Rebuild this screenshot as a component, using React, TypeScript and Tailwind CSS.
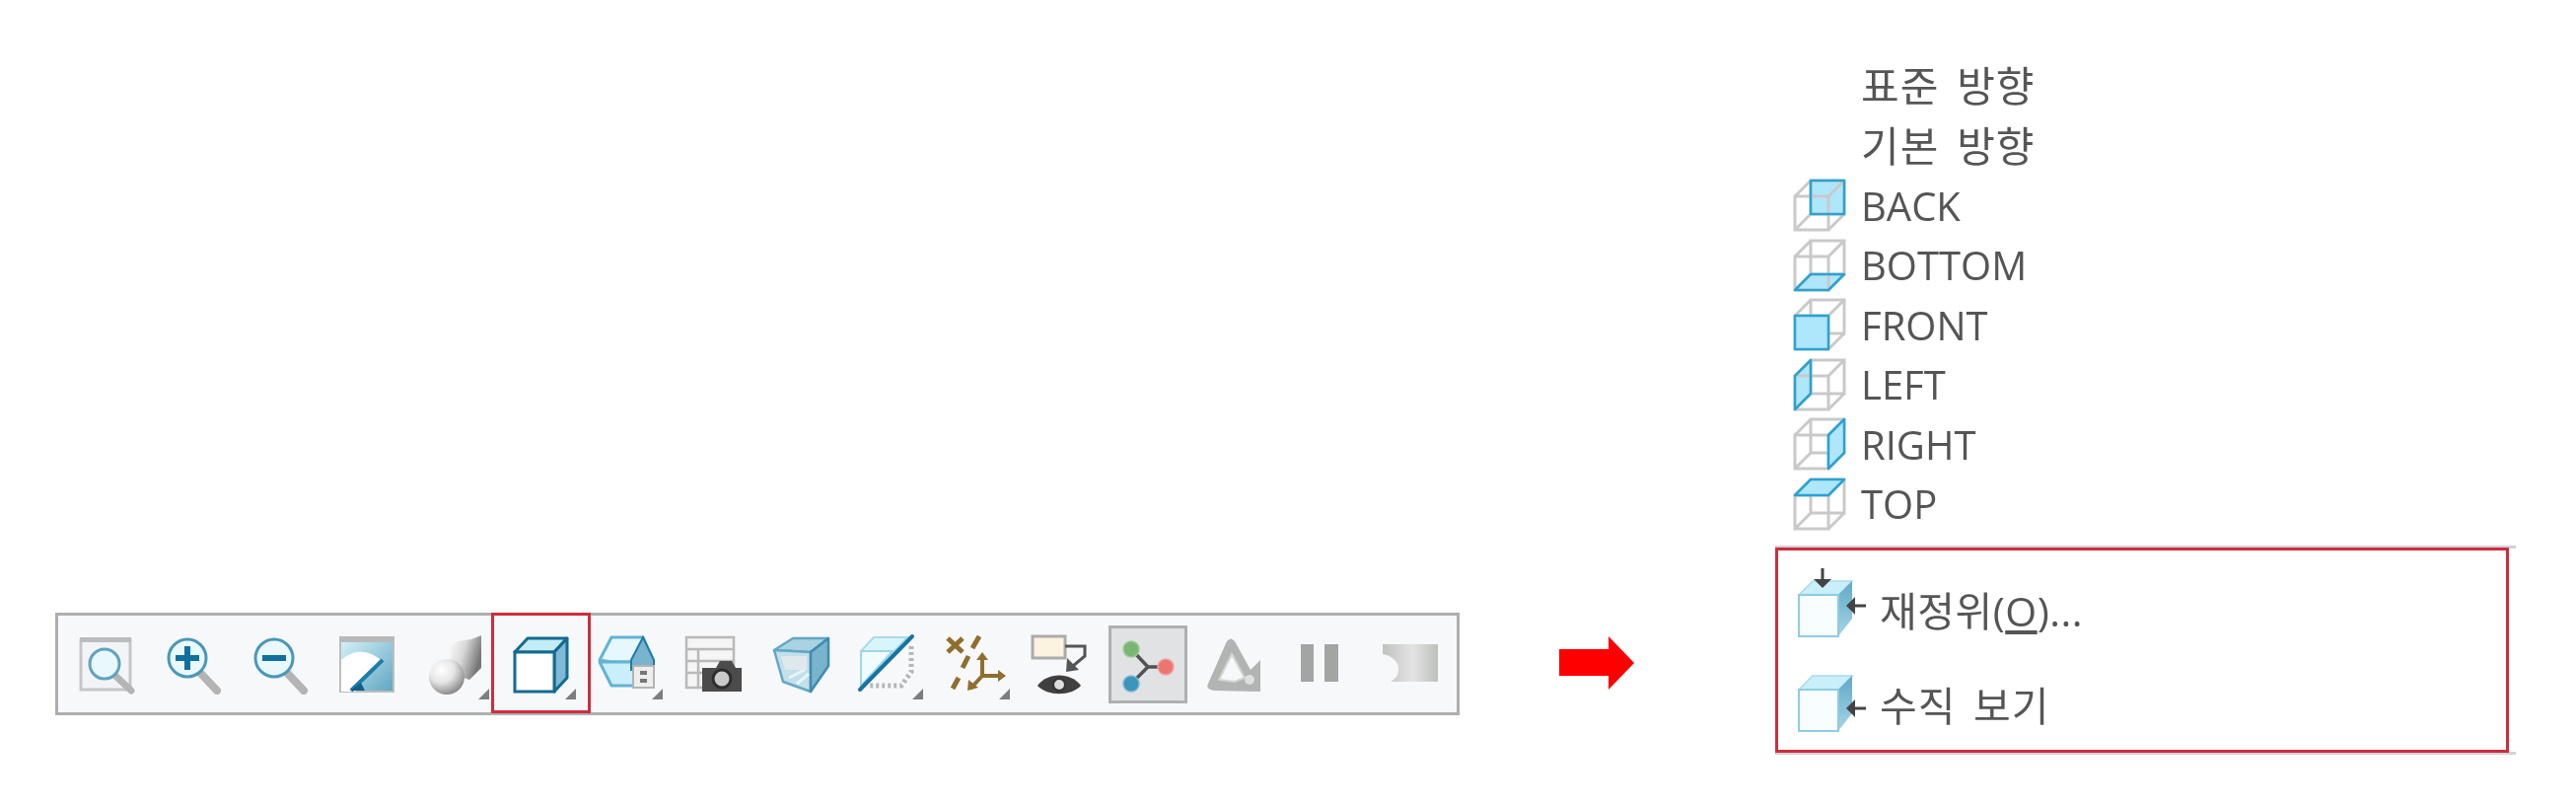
const handle = "#b4b4b4";

function Marker() {
  return <path d="M55 66 L66 66 L66 55 Z" fill="#7d7d7d" />;
}

function ZoomWindow() {
  return (
    <svg width="60" height="60" viewBox="0 0 60 60" className="overflow-visible">
      <rect x="4" y="6" width="50" height="50" fill="#f3f4f5" stroke="#c6c6c6" strokeWidth="3" />
      <rect x="3" y="3" width="52" height="5" fill="#bcbcbc" />
      <line x1="38" y1="41" x2="55" y2="57" stroke={handle} strokeWidth="7" strokeLinecap="round" />
      <circle cx="28" cy="30" r="15" fill="#e8f8fd" stroke="#5da4bf" strokeWidth="3" />
    </svg>
  );
}

function ZoomIn({ plus }: { plus?: boolean }) {
  return (
    <svg width="60" height="60" viewBox="0 0 60 60" className="overflow-visible">
      <line x1="38" y1="40" x2="54" y2="57" stroke={handle} strokeWidth="8" strokeLinecap="round" />
      <circle cx="24" cy="24" r="19" fill="#e9f8fd" stroke="#4a98b6" strokeWidth="3" />
      <rect x="12" y="21" width="24" height="6" fill="#0f709e" />
      {plus && <rect x="21" y="12" width="6" height="24" fill="#0f709e" />}
    </svg>
  );
}

function Refit() {
  return (
    <svg width="60" height="60" viewBox="0 0 60 60" className="overflow-visible">
      <defs>
        <linearGradient id="refit" x1="0" y1="0" x2="1" y2="1">
          <stop offset="0" stopColor="#d9f3fa" />
          <stop offset="1" stopColor="#5ea6c2" />
        </linearGradient>
      </defs>
      <rect x="3" y="4" width="54" height="54" fill="url(#refit)" stroke="#bdbdbd" strokeWidth="2" />
      <rect x="2" y="2" width="56" height="6" fill="#b9b9b9" />
      <path d="M4 58 L4 26 C18 14 32 16 44 26 L18 58 Z" fill="#ffffff" />
      <path d="M14 57 L46 26" stroke="#1d7da6" strokeWidth="4" />
      <path d="M13 57 L24 49 L28 57 Z" fill="#125f86" />
    </svg>
  );
}

function Shaded() {
  return (
    <svg width="60" height="60" viewBox="0 0 60 60" className="overflow-visible">
      <defs>
        <radialGradient id="ball" cx="0.35" cy="0.3" r="0.8">
          <stop offset="0" stopColor="#ffffff" />
          <stop offset="0.45" stopColor="#e6e6e6" />
          <stop offset="1" stopColor="#777777" />
        </radialGradient>
        <linearGradient id="block" x1="0" y1="0" x2="1" y2="0.4">
          <stop offset="0" stopColor="#ffffff" />
          <stop offset="0.5" stopColor="#d8d8d8" />
          <stop offset="1" stopColor="#777777" />
        </linearGradient>
      </defs>
      <path d="M26 12 L34 7 L48 5 L58 1 L58 34 L46 46 L28 40 Z" fill="url(#block)" />
      <circle cx="23" cy="43" r="18" fill="url(#ball)" />
      <Marker />
    </svg>
  );
}

function ViewCube() {
  return (
    <svg width="60" height="60" viewBox="0 0 60 60" className="overflow-visible">
      <path d="M4 18 L17 4 L57 4 L44 18 Z" fill="#c3ecf6" stroke="#136a91" strokeWidth="3" strokeLinejoin="round" />
      <path d="M44 18 L57 4 L57 44 L44 58 Z" fill="#7fb9d3" stroke="#136a91" strokeWidth="3" strokeLinejoin="round" />
      <rect x="4" y="18" width="40" height="40" fill="#ffffff" stroke="#136a91" strokeWidth="3" />
      <Marker />
    </svg>
  );
}

function SavedViews() {
  return (
    <svg width="60" height="60" viewBox="0 0 60 60" className="overflow-visible">
      <path d="M2 26 L14 3 L46 3 L56 26 L46 28 L14 28 Z" fill="#e6f8fd" stroke="#62b4d2" strokeWidth="3" strokeLinejoin="round" />
      <path d="M2 28 L14 52 L44 52 L44 28 Z" fill="#c9effa" stroke="#62b4d2" strokeWidth="3" strokeLinejoin="round" />
      <path d="M34 26 L46 3 L57 26 L57 36 L34 36 Z" fill="#78b4cd" stroke="#1a7ca8" strokeWidth="2" />
      <rect x="36" y="32" width="21" height="22" fill="#eeeeee" stroke="#b4b4b4" strokeWidth="2" />
      <rect x="43" y="37" width="7" height="4" fill="#777777" />
      <rect x="43" y="45" width="7" height="4" fill="#777777" />
      <Marker />
    </svg>
  );
}

function ViewManager() {
  return (
    <svg width="60" height="60" viewBox="0 0 60 60" className="overflow-visible">
      <rect x="2" y="3" width="48" height="51" fill="#f5f5f5" stroke="#b9b9b9" strokeWidth="2.5" />
      <path d="M2 15 L50 15 M2 27 L50 27 M2 39 L26 39 M14 15 L14 54" stroke="#b9b9b9" strokeWidth="2.5" />
      <path d="M18 34 L32 34 L36 27 L48 27 L52 34 L58 34 L58 58 L18 58 Z" fill="#4b4b4b" />
      <circle cx="38" cy="45" r="9" fill="#c9c9c9" stroke="#2d2d2d" strokeWidth="3" />
    </svg>
  );
}

function Perspective() {
  return (
    <svg width="60" height="60" viewBox="0 0 60 60" className="overflow-visible">
      <path d="M3 16 L22 4 L58 4 L40 18 Z" fill="#a9d3e2" stroke="#62a8c4" strokeWidth="2.5" strokeLinejoin="round" />
      <path d="M3 16 L40 18 L40 58 L12 48 Z" fill="#c3dfe9" stroke="#62a8c4" strokeWidth="2.5" strokeLinejoin="round" />
      <path d="M40 18 L58 4 L58 32 L40 58 Z" fill="#79b4cc" stroke="#3f8cae" strokeWidth="2.5" strokeLinejoin="round" />
      <path d="M10 22 L36 22 L36 36 L14 36 Z" fill="#dfe9ec" />
      <path d="M18 44 L34 36 M26 50 L38 40" stroke="#e7f5f9" strokeWidth="3" />
    </svg>
  );
}

function SectionPlane() {
  return (
    <svg width="60" height="60" viewBox="0 0 60 60" className="overflow-visible">
      <path d="M3 17 L16 3 L50 3 L3 52 Z" fill="#d9f5fc" stroke="#a6dcec" strokeWidth="2" />
      <path d="M3 17 L35 17 L3 52 Z" fill="#f0fbfe" stroke="#9dd6e7" strokeWidth="2" />
      <path d="M54 12 L54 38 L44 52 L10 52" fill="none" stroke="#b7b7b7" strokeWidth="5" strokeDasharray="3 3" />
      <line x1="2" y1="56" x2="55" y2="2" stroke="#16749f" strokeWidth="4" strokeLinecap="round" />
      <Marker />
    </svg>
  );
}

function Datums() {
  const c = "#8f6e2e";
  return (
    <svg width="60" height="60" viewBox="0 0 60 60" className="overflow-visible">
      <path d="M3 4 L18 18 M18 4 L3 18" stroke={c} strokeWidth="5" />
      <path d="M35 2 L28 14 M24 22 L18 34 M14 44 L8 55" stroke={c} strokeWidth="5" />
      <path d="M38 24 L38 42 L58 42 M38 42 L26 55" fill="none" stroke={c} strokeWidth="4" />
      <path d="M32 26 L38 18 L44 26 Z M54 36 L62 42 L54 48 Z M24 46 L34 54 L23 57 Z" fill={c} />
      <Marker />
    </svg>
  );
}

function Annotations() {
  return (
    <svg width="60" height="60" viewBox="0 0 60 60" className="overflow-visible">
      <rect x="1" y="2" width="33" height="22" fill="#fbf3df" stroke="#ababab" strokeWidth="3" />
      <path d="M34 12 L54 12 L54 22 L42 32" fill="none" stroke="#555555" strokeWidth="3" />
      <path d="M36 24 L48 36 L35 38 Z" fill="#555555" />
      <path d="M6 52 C16 38 40 38 50 52 C40 63 16 63 6 52 Z" fill="#404040" />
      <circle cx="28" cy="51" r="6" fill="#dddddd" stroke="#333333" strokeWidth="2" />
    </svg>
  );
}

function Spin() {
  return (
    <svg width="60" height="60" viewBox="0 0 60 60" className="overflow-visible">
      <path d="M13 15 L30 33 L13 50 M30 33 L48 33" fill="none" stroke="#4f5356" strokeWidth="3.5" />
      <circle cx="13" cy="15" r="8" fill="#7ab673" stroke="#9ccb96" strokeWidth="1.5" />
      <circle cx="48" cy="33" r="8" fill="#ea7672" stroke="#f2a3a0" strokeWidth="1.5" />
      <circle cx="13" cy="50" r="8" fill="#3d94bc" stroke="#79b8d4" strokeWidth="1.5" />
    </svg>
  );
}

function Triangle() {
  return (
    <svg width="60" height="60" viewBox="0 0 60 60" className="overflow-visible">
      <path d="M3 50 L22 7 Q26 2 30 7 L46 36 L56 26 L56 58 L10 57 Q0 56 3 50 Z" fill="#b2b3b3" />
      <path d="M14 46 L27 20 L40 44 L30 48 Z" fill="#f7f8fa" stroke="#d3d4d4" strokeWidth="2" />
      <circle cx="45" cy="46" r="5" fill="#dedede" />
    </svg>
  );
}

function Pause() {
  return (
    <svg width="60" height="60" viewBox="0 0 60 60" className="overflow-visible">
      <rect x="9" y="10" width="13" height="38" fill="#a3a5a5" />
      <rect x="33" y="10" width="14" height="38" fill="#a3a5a5" />
    </svg>
  );
}

function Flat() {
  return (
    <svg width="60" height="60" viewBox="0 0 60 60" className="overflow-visible">
      <defs>
        <linearGradient id="flat" x1="0" y1="0" x2="1" y2="0">
          <stop offset="0" stopColor="#c0c2c0" />
          <stop offset="0.55" stopColor="#e3e4e3" />
          <stop offset="1" stopColor="#bdbfbd" />
        </linearGradient>
      </defs>
      <path d="M4 10 L60 10 L60 48 L12 48 C24 42 24 24 4 20 Z" fill="url(#flat)" />
    </svg>
  );
}

// 메뉴 큐브: 파란 면, 회색 와이어, 파란 테두리 순서
function WireCube({ face }: { face: string }) {
  const faces: Record<string, string> = {
    BACK: "M18 2 L52 2 L52 36 L18 36 Z",
    BOTTOM: "M2 52 L18 36 L52 36 L36 52 Z",
    FRONT: "M2 18 L36 18 L36 52 L2 52 Z",
    LEFT: "M2 18 L18 2 L18 36 L2 52 Z",
    RIGHT: "M36 18 L52 2 L52 36 L36 52 Z",
    TOP: "M2 18 L18 2 L52 2 L36 18 Z",
  };
  const overFill = face === "FRONT" || face === "RIGHT" || face === "TOP";
  const wire = (
    <path
      d="M2 18 L36 18 L36 52 L2 52 Z M18 2 L52 2 L52 36 L18 36 Z M2 18 L18 2 M36 18 L52 2 M36 52 L52 36 M2 52 L18 36"
      fill="none"
      stroke="#c9c9c9"
      strokeWidth="3"
    />
  );
  const fill = <path d={faces[face]} fill="#aee6fb" />;
  return (
    <svg width="54" height="54" viewBox="0 0 54 54" className="shrink-0">
      {overFill ? wire : fill}
      {overFill ? fill : wire}
      <path d={faces[face]} fill="none" stroke="#2ba3d0" strokeWidth="2.5" strokeLinejoin="round" />
    </svg>
  );
}

function ReorientCube({ top, arrowY }: { top?: boolean; arrowY: number }) {
  return (
    <svg width="70" height="70" viewBox="0 0 70 70" className="shrink-0 overflow-visible">
      <defs>
        <linearGradient id="sideFace" x1="0" y1="0" x2="0" y2="1">
          <stop offset="0" stopColor="#5fa9c9" />
          <stop offset="1" stopColor="#a6d4e6" />
        </linearGradient>
      </defs>
      <path d="M1 18 L15 4 L55 4 L41 18 Z" fill="#c9eff9" stroke="#a9dcec" strokeWidth="1.5" />
      <path d="M41 18 L55 4 L55 42 L41 60 Z" fill="url(#sideFace)" />
      <rect x="1" y="18" width="40" height="42" fill="#f8fdff" stroke="#8ccde3" strokeWidth="2" />
      {top && (
        <>
          <path d="M25 -9 L25 4" stroke="#444444" strokeWidth="3" />
          <path d="M16 2 L34 2 L25 11 Z" fill="#444444" />
        </>
      )}
      <path d={`M69 ${arrowY} L54 ${arrowY}`} stroke="#444444" strokeWidth="3" />
      <path d={`M58 ${arrowY - 9} L49 ${arrowY} L58 ${arrowY + 9} Z`} fill="#444444" />
    </svg>
  );
}

const tools = [
  <ZoomWindow />,
  <ZoomIn plus />,
  <ZoomIn />,
  <Refit />,
  <Shaded />,
  <ViewCube />,
  <SavedViews />,
  <ViewManager />,
  <Perspective />,
  <SectionPlane />,
  <Datums />,
  <Annotations />,
  <Spin />,
  <Triangle />,
  <Pause />,
  <Flat />,
];

const views = ["BACK", "BOTTOM", "FRONT", "LEFT", "RIGHT", "TOP"];

export default function App() {
  return (
    <div className="w-[2612px] h-[818px] bg-white flex font-['Open_Sans','Noto_Sans_CJK_KR',sans-serif] text-[#555555]">
      {/* 툴바 */}
      <div className="w-[1581px] pl-[56px] pt-[621px] shrink-0">
        <div className="w-[1424px] h-[104px] border-[3px] border-[#adafaf] bg-[#f7f8fa] flex items-center pl-[5px]">
          {tools.map((icon, i) => (
            <div key={i} className="relative w-[88px] h-[79px] flex items-center justify-center shrink-0">
              {i === 5 && (
                <div className="absolute left-[-6px] right-[-7px] top-[-13px] bottom-[-10px] border-[3px] border-[#d02c3c]" />
              )}
              {i === 12 && <div className="absolute inset-x-[4px] inset-y-0 border-[3px] border-[#aeb0b0] bg-[#e1e2e4]" />}
              <div className="relative blur-[0.6px]">{icon}</div>
            </div>
          ))}
        </div>
      </div>

      {/* 화살표 */}
      <div className="w-[76px] h-[818px] shrink-0 pt-[645px]">
        <svg width="76" height="54" viewBox="0 0 76 54">
          <path d="M0 13 L50 13 L50 0 L76 27 L50 54 L50 40 L0 40 Z" fill="#ff0000" />
        </svg>
      </div>

      {/* 메뉴 */}
      <div className="ml-[143px] w-[751px] pt-[56px] shrink-0">
        <div className="text-[40px] leading-[61px] blur-[0.5px]">
          <div className="pl-[87px] h-[61px] text-[42px] tracking-[1px] [word-spacing:6px]">표준 방향</div>
          <div className="pl-[87px] h-[61px] text-[42px] tracking-[1px] [word-spacing:6px]">기본 방향</div>
          {views.map((v) => (
            <div key={v} className="h-[60.5px] flex items-center gap-[15px] pl-[18px]">
              <WireCube face={v} />
              <span>{v}</span>
            </div>
          ))}
        </div>
        <div className="mt-[12px] border-y-[3px] border-[#cfd2d6]">
          <div className="border-[3px] border-[#d02c3c] w-[744px] h-[208px] -my-[1px] flex flex-col justify-center gap-[26px] pl-[20px] pt-[18px] text-[41px]">
            <div className="flex items-center gap-[13px] h-[70px]">
              <ReorientCube top arrowY={29} />
              <span className="blur-[0.5px] tracking-[0.5px]">
                재정위(<span className="underline underline-offset-4">O</span>)...
              </span>
            </div>
            <div className="flex items-center gap-[13px] h-[70px]">
              <ReorientCube arrowY={37} />
              <span className="blur-[0.5px] tracking-[1px] [word-spacing:6px]">수직 보기</span>
            </div>
          </div>
        </div>
      </div>
    </div>
  );
}
